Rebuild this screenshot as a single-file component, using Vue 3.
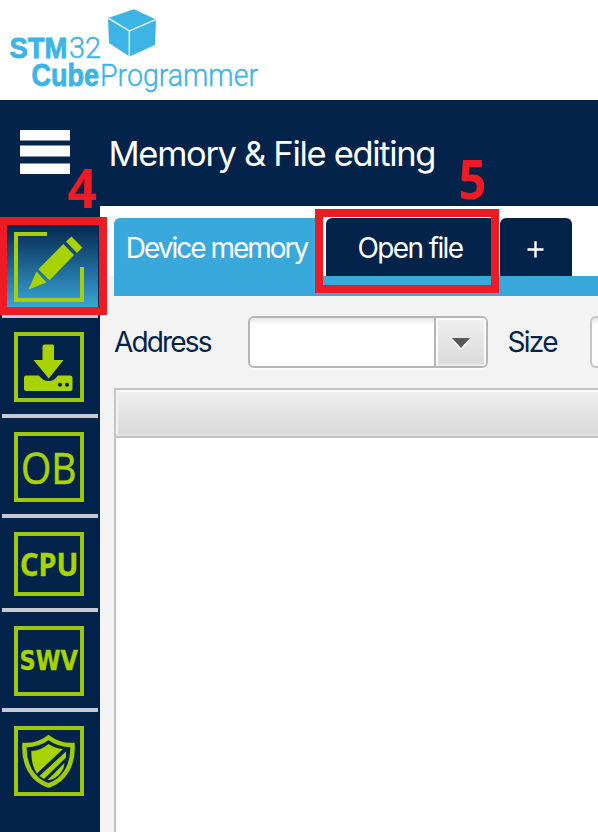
<script setup>
import { ref } from 'vue'

const active = ref('edit')
const tools = [
  { id: 'edit', height: 70 },
  { id: 'download', height: 70 },
  { id: 'ob', height: 70 },
  { id: 'cpu', height: 64 },
  { id: 'swv', height: 70 },
  { id: 'security', height: 70 }
]
</script>

<template>
  <div class="app">
    <header class="brand">
      <svg class="logo" width="270" height="100" viewBox="0 0 270 100">
        <g class="bold">
          <text x="9.5" y="58" font-size="29.500" textLength="58" lengthAdjust="spacingAndGlyphs">STM</text>
          <text x="31.500" y="85.5" font-size="31" textLength="67.500" lengthAdjust="spacingAndGlyphs">Cube</text>
        </g>
        <g class="light">
          <text x="69" y="58" font-size="29" textLength="32" lengthAdjust="spacingAndGlyphs">32</text>
          <text x="100" y="85.5" font-size="31.5" textLength="158" lengthAdjust="spacingAndGlyphs">Programmer</text>
        </g>
        <path class="cube" d="M108 18 L134 9.300 L156 19.500 L155 45 L129.500 56.500 L109 43Z" />
        <path class="seam" d="M108 18 L129.300 31 L156 19.500 M129.300 31 V56.500" />
      </svg>
    </header>

    <div class="titlebar">
      <button class="menu" aria-label="Menu">
        <svg width="50" height="44" viewBox="0 0 50 44" fill="#fff">
          <rect width="50" height="10.5" />
          <rect y="15.500" width="50" height="11" />
          <rect y="33.500" width="50" height="10.5" />
        </svg>
      </button>
      <svg class="title" width="340" height="106" fill="#fff">
        <text x="-1.500" y="65.700" font-size="34.5" textLength="328" lengthAdjust="spacing">Memory &amp; File editing</text>
      </svg>
    </div>

    <div class="body">
      <nav class="sidebar">
        <button
          v-for="tool in tools"
          :key="tool.id"
          class="tool"
          :class="{ active: active === tool.id }"
          @click="active = tool.id"
        >
          <svg width="70" :height="tool.height" :viewBox="`0 0 70 ${tool.height}`">
            <path v-if="tool.id === 'edit'" class="frame" d="M33 2H2V68H68V35" />
            <rect v-else class="frame" x="2" y="2" width="66" :height="tool.height - 4" />

            <g v-if="tool.id === 'edit'">
              <path d="M49.300 12 L60 23 L35.500 48.300 L24.300 37.300Z M57.500 4.500 L68.300 15.500 L63 21 L52 9.500Z M22.500 39.500 L32.500 50.500 L14.500 57.500Z" />
            </g>
            <g v-else-if="tool.id === 'download'">
              <path d="M30.500 12.500H38.500Q40 12.500 40 14V28H49.500L34.800 46.500L19.500 28H28.500V14.500Q28.500 12.500 30.500 12.500Z" />
              <path d="M12 43.500H25Q29 49 34.500 49Q40 49 44 43.500H56Q58.500 43.500 58.500 46V56.500Q58.500 59 56 59H12.500Q10 59 10 56.500V45.500Q10 43.500 12 43.500Z" />
              <g class="hole"><circle cx="46" cy="52.800" r="2" /><circle cx="53" cy="52.800" r="2" /></g>
            </g>
            <text v-else-if="tool.id === 'ob'" class="ob" x="7" y="51.500" textLength="55.500" lengthAdjust="spacingAndGlyphs">OB</text>
            <text v-else-if="tool.id === 'cpu'" class="cpu" x="6" y="44.300" textLength="58.500" lengthAdjust="spacingAndGlyphs">CPU</text>
            <text v-else-if="tool.id === 'swv'" class="swv" x="5.500" y="43.500" textLength="58.500" lengthAdjust="spacingAndGlyphs">SWV</text>
            <g v-else>
              <path class="shield" d="M34.500 11.500 Q45 19.500 58.500 19 C59.500 38 51 54 34.500 59.500 C18 54 9.500 38 10.500 19 Q24 19.500 34.500 11.500Z" />
              <path d="M34.500 18 Q41 22.500 49 23 L22.800 47.500 Q17 39 17.300 25 Q27 24.500 34.500 18Z" />
              <path d="M52 25.500 V31.500 L30 53 L25.500 50Z M50.500 37 Q50 46 41 52 Q37 54.500 33.500 54Z" />
            </g>
          </svg>
        </button>
      </nav>

      <main class="content">
        <div class="tabs">
          <button class="tab device">
            <svg width="208" height="58"><text x="11.800" y="39.700" textLength="183.500" lengthAdjust="spacing">Device memory</text></svg>
          </button>
          <button class="tab open">
            <svg width="170" height="58"><text x="31.500" y="39.700" textLength="106.500" lengthAdjust="spacing">Open file</text></svg>
          </button>
          <button class="tab add">
            <svg width="72" height="58"><path d="M27.500 31.500H43.500M35.500 23.300V39.500" stroke="#fff" stroke-width="2.400" /></svg>
          </button>
        </div>
        <div class="strip"></div>

        <div class="controls">
          <svg class="label address" width="134" height="52"><text x="0" y="35.700" textLength="98.500" lengthAdjust="spacing">Address</text></svg>
          <div class="combo">
            <div class="value"></div>
            <button class="arrow" aria-label="Choose address">
              <svg width="18" height="12" viewBox="0 0 18 12">
                <path d="M0 2H18L9 12Z" fill="#fff" />
                <path d="M0 0H18L9 10Z" fill="#575757" />
              </svg>
            </button>
          </div>
          <svg class="label size" width="102" height="52"><text x="19.500" y="35.700" textLength="51" lengthAdjust="spacing">Size</text></svg>
          <div class="field"></div>
        </div>

        <div class="table">
          <div class="thead"></div>
        </div>
      </main>
    </div>

    <div class="mark mark-edit"></div>
    <div class="mark mark-open"></div>
    <svg class="step step-edit" width="36" height="48"><text x="2.500" y="40" textLength="29.500" lengthAdjust="spacingAndGlyphs">4</text></svg>
    <svg class="step step-open" width="36" height="48"><text x="2.500" y="40" textLength="28" lengthAdjust="spacingAndGlyphs">5</text></svg>
  </div>
</template>

<style>
body { margin: 0; overflow: hidden; }
</style>

<style scoped>
.app {
  position: relative;
  display: flex;
  flex-direction: column;
  width: 598px;
  height: 832px;
  overflow: hidden;
  background: #fff;
  font-family: Inter, "Liberation Sans", sans-serif;
}
svg { display: block; flex: none; overflow: visible; }
button { display: block; margin: 0; padding: 0; border: 0; background: none; font: inherit; }

.brand { height: 100px; flex: none; }
.logo { fill: #3cb4e6; }
.logo .bold { font-family: "Liberation Sans", sans-serif; font-weight: 700; stroke: #3cb4e6; stroke-width: 0.8; }
.logo .light { font-family: Roboto, sans-serif; font-weight: 300; stroke: #3cb4e6; stroke-width: 0.4; }
.seam { fill: none; stroke: #d5effa; stroke-width: 1.5; }

.titlebar { display: flex; align-items: flex-start; height: 106px; flex: none; background: #03234b; }
.menu { width: 110px; padding: 30px 0 0 20px; }

.body { display: flex; flex: 1; min-height: 0; }
.sidebar { width: 96px; padding: 12px 2px 0; background: #03234b; flex: none; }
.tool { width: 96px; padding: 14px 12px 12px; border-bottom: 4px solid #c5cad3; fill: #a9d300; }
.tool:last-child { border-bottom: 0; }
.tool.active { background: linear-gradient(#03234b 5%, #39a9dc 96%); }
.frame { fill: none; stroke: #9cc70a; stroke-width: 4; }
.active .frame { stroke: #a5cf0c; }
.hole { fill: #03234b; }
.shield { fill: none; stroke: #a2cc07; stroke-width: 4.5; }
.ob { font-family: "Open Sans", sans-serif; font-size: 43px; stroke: #a9d300; stroke-width: 0.6; }
.cpu { font-family: "Noto Sans", sans-serif; font-size: 32px; font-weight: 700; stroke: #a9d300; stroke-width: 0.4; }
.swv { font-family: "DejaVu Sans", sans-serif; font-size: 27px; font-weight: 700; stroke: #a9d300; stroke-width: 0.4; }

.content { display: flex; flex-direction: column; flex: 1; min-width: 0; background: #f3f3f3; }
.tabs { display: flex; gap: 4px; height: 58px; padding: 12px 0 0 14px; background: #fff; }
.tab { height: 58px; flex: none; border-radius: 6px 6px 0 0; background: #03234b; fill: #fff; font-size: 28px; }
.tab.device { background: #39a9dc; }
.strip { height: 20px; margin-left: 14px; background: #39a9dc; }

.controls { display: flex; height: 52px; padding: 20px 0 0 14px; }
.label { fill: #03234b; font-size: 28px; }
.combo {
  box-sizing: border-box;
  display: flex;
  flex: none;
  width: 240px;
  height: 52px;
  border: 2px solid #b5b5b5;
  border-radius: 6px;
  background: #fff;
  box-shadow: 0 2px 0 #fbfbfb;
  overflow: hidden;
}
.value { width: 184px; flex: none; border-right: 2px solid #b5b5b5; box-shadow: inset 0 6px 6px -4px #ddd; }
.arrow {
  box-sizing: border-box;
  display: flex;
  justify-content: center;
  align-items: flex-start;
  width: 50px;
  flex: none;
  padding-top: 18px;
  border: 2px solid #fafafa;
  border-bottom-color: #e9e9e9;
  background: linear-gradient(#efefef, #dadada);
}
.field {
  box-sizing: border-box;
  width: 80px;
  height: 52px;
  flex: none;
  border: 2px solid #c4c4c4;
  border-radius: 6px;
  background: #fff;
  box-shadow: inset 0 6px 6px -4px #ddd;
}
.table { flex: 1; margin: 20px 0 0 14px; border: 2px solid #c4c4c4; border-width: 2px 0 0 2px; background: #fff; }
.thead {
  height: 42px;
  border-top: 2px solid #fafafa;
  border-left: 2px solid #f3f3f3;
  background: linear-gradient(#eee, #d9d9d9);
  box-shadow: 0 2px 0 #e2e2e2, 0 4px 0 #c4c4c4;
}

.mark { position: absolute; box-sizing: border-box; border: 8px solid #ed1c24; }
.mark-edit { left: 0; top: 217px; width: 107px; height: 98px; border-left-width: 7px; }
.mark-open { left: 315px; top: 209px; width: 184px; height: 84px; }
.step { position: absolute; fill: #ed1c24; font: 700 54px "Open Sans", sans-serif; }
.step-edit { left: 65px; top: 168px; }
.step-open { left: 456px; top: 159px; }
</style>
